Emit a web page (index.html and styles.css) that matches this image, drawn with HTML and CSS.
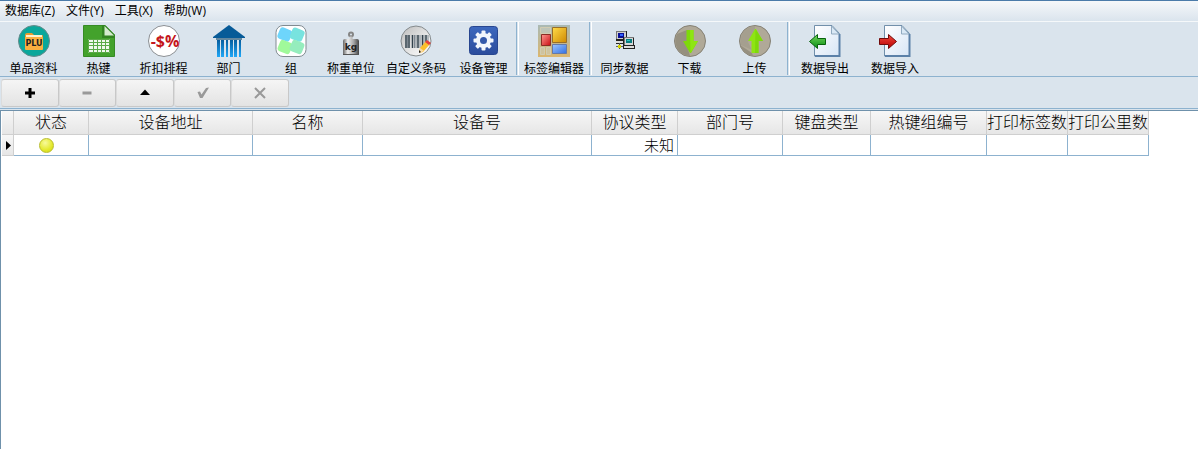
FILE: index.html
```html
<!DOCTYPE html>
<html lang="zh-CN">
<head>
<meta charset="utf-8">
<title>设备管理</title>
<link rel="stylesheet" href="styles.css">
</head>
<body>
<div class="app">
  <nav class="menu">
    <button class="menu-item">数据库(Z)</button>
    <button class="menu-item">文件(Y)</button>
    <button class="menu-item">工具(X)</button>
    <button class="menu-item">帮助(W)</button>
  </nav>

  <div class="toolbar" role="toolbar">
    <button class="tool">
      <svg class="icon" viewBox="0 0 32 32"><circle cx="16" cy="16" r="15.5" fill="#0aa79b" stroke="#668b8b"/><path d="M7 10q0-2 2-2h5l2 2h8q1 0 1 1v13H7z" fill="#ec9a2e"/><path d="M8 10h16v4H8z" fill="#fff0cc"/><rect x="7" y="12" width="18" height="13" rx="1" fill="#fbb040"/><text x="16" y="20.500" text-anchor="middle" class="plu">PLU</text></svg>
      <span>单品资料</span>
    </button>
    <button class="tool">
      <svg class="icon" viewBox="0 0 32 32"><path d="M.5.500H22L31.500 10v21.500H.5z" fill="#43a22c" stroke="#368b25"/><path d="M19 0h3l10 10v3H19z" fill="#328521"/><path d="M21.500 1v9.500H31z" fill="#d4ecce"/><rect x="5" y="14" width="22" height="14" fill="#f1f8ee"/><path d="M5.500 14.500h21v13h-21zM5 17.500h22M5 20.500h22M5 24.500h22M10.500 14v14M14.500 14v14M18.500 14v14M22.500 14v14" fill="none" stroke="#5baa48"/></svg>
      <span>热键</span>
    </button>
    <button class="tool">
      <svg class="icon" viewBox="0 0 32 32"><circle cx="16" cy="16" r="15.500" fill="#fff" stroke="#8b8f93"/><text x="17" y="22" text-anchor="middle" class="discount">-$%</text></svg>
      <span>折扣排程</span>
    </button>
    <button class="tool">
      <svg class="icon" viewBox="0 0 32 32"><defs><linearGradient id="pillar" x2="0" y2="1"><stop stop-color="#075e9f"/><stop offset="1" stop-color="#20a8f8"/></linearGradient></defs><path d="M16 0l16 12v1H0v-1z" fill="#075b98"/><path d="M3 13h26v2H3z" fill="#62879f"/><path d="M4 15h3v17H4zM8 15h3v17H8zM13 15h2v17h-2zM17 15h3v17h-3zM21 15h3v17h-3zM26 15h2v17h-2z" fill="url(#pillar)"/></svg>
      <span>部门</span>
    </button>
    <button class="tool tool-narrow">
      <svg class="icon" viewBox="0 0 32 32"><rect x="1" y=".5" width="30" height="31" rx="7" fill="#fff" stroke="#818b91"/><g><rect x="3.500" y="3.500" width="13" height="12" rx="3" fill="#6ed5fb" transform="rotate(22 10 9)"/><rect x="16" y="3.500" width="13" height="12" rx="3" fill="#78e3df" transform="rotate(22 22 9)"/><rect x="3.500" y="16" width="13" height="12" rx="3" fill="#a0f99a" transform="rotate(22 10 22)"/><rect x="15.500" y="16" width="13" height="12" rx="3" fill="#95edbd" transform="rotate(22 22 22)"/></g></svg>
      <span>组</span>
    </button>
    <button class="tool tool-narrow">
      <svg class="icon" viewBox="0 0 32 32"><defs><linearGradient id="steel"><stop stop-color="#666"/><stop offset=".3" stop-color="#eee"/><stop offset=".65" stop-color="#aaa"/><stop offset="1" stop-color="#444"/></linearGradient></defs><circle cx="16" cy="9.500" r="2" fill="none" stroke="#858585" stroke-width="2"/><path d="M14.500 11.500h3v2.500h4.500q2 0 2 2v14H8V16q0-2 2-2h4.500z" fill="url(#steel)"/><path d="M8 29.500h16" stroke="#555"/><text x="16" y="25" text-anchor="middle" class="kg">kg</text></svg>
      <span>称重单位</span>
    </button>
    <button class="tool tool-wide">
      <svg class="icon" viewBox="0 0 32 32"><defs><linearGradient id="silver" x2="1" y2="1"><stop stop-color="#bbb"/><stop offset=".6" stop-color="#e9e9e9"/><stop offset="1" stop-color="#fff"/></linearGradient></defs><circle cx="16" cy="16" r="15" fill="url(#silver)" stroke="#858b8e"/><path d="M6 10v13M9 10v13M12.500 10v13M18 10v13M22.500 10v13M26 10v9" stroke="#32414c" stroke-width="1.500"/><path d="M7.500 10v13M14.500 10v13M16 10v13M20 10v13M24 10v10M28 10v8" stroke="#7d8790"/><path d="M19 28l1-5 6-7 4 3-7 8z" fill="#fbc02d"/><path d="M25 17l2-2 4 3-2 2z" fill="#e5413b"/><path d="M19 28l1-5 4 3z" fill="#f7d9aa"/><path d="M19 28v-3l2 2z" fill="#222"/></svg>
      <span>自定义条码</span>
    </button>
    <button class="tool">
      <svg class="icon" viewBox="0 0 32 32"><defs><linearGradient id="blue" x2="0" y2="1"><stop stop-color="#3d68be"/><stop offset="1" stop-color="#2b4c9c"/></linearGradient></defs><rect x="1.500" y="1.500" width="28" height="28" rx="3" fill="url(#blue)" stroke="#284690"/><g fill="#f2f6fc" transform="translate(15.500 15.500)"><circle r="7.500"/><g id="teeth"><rect x="-2" y="-10" width="4" height="20" rx="1"/><rect x="-10" y="-2" width="20" height="4" rx="1"/></g><use href="#teeth" transform="rotate(45)"/></g><circle cx="15.500" cy="15.500" r="3.500" fill="#3459aa"/></svg>
      <span>设备管理</span>
    </button>
    <span class="separator"></span>
    <button class="tool tool-wide">
      <svg class="icon" viewBox="0 0 32 32"><defs><linearGradient id="sand" x2="0" y2="1"><stop stop-color="#a9b9b4"/><stop offset="1" stop-color="#dbb66e"/></linearGradient><linearGradient id="gold" x2="1" y2="1"><stop stop-color="#ffdb4a"/><stop offset="1" stop-color="#cf8900"/></linearGradient><linearGradient id="redbox" x2="1" y2="1"><stop stop-color="#ff9790"/><stop offset="1" stop-color="#c90d12"/></linearGradient><linearGradient id="bluebox" x2="1" y2="1"><stop stop-color="#9dc5ff"/><stop offset="1" stop-color="#316fe0"/></linearGradient></defs><path d="M0 0h32v32H0z" fill="url(#sand)"/><path d="M2.500 2.500h10v6h-10zM2.500 22.500h4v7h-4zM8.500 22.500h4v7h-4z" fill="#cbd0c3" fill-opacity=".5" stroke="#d1ccb2"/><path d="M14.500 2.500h14v15h-14z" fill="url(#gold)" stroke="#986f28"/><path d="M3.500 9.500h9v11h-9z" fill="url(#redbox)" stroke="#8c2c25"/><path d="M14.500 19.500h14v9h-14z" fill="url(#bluebox)" stroke="#6579a5"/></svg>
      <span>标签编辑器</span>
    </button>
    <span class="separator"></span>
    <button class="tool">
      <svg class="icon" viewBox="0 0 32 32"><path d="M7 6h11v9h-1v4H7z" fill="#222"/><path d="M7 6h10v8H7z" fill="#d0d0d0"/><path d="M7 6h10v1H8v7H7z" fill="#777"/><path d="M9 8h6v5H9z" fill="#0a0f96"/><path d="M11 9h3v2h-3z" fill="#3264ff"/><path d="M7 16h8v2H7z" fill="#ddd"/><path d="M14 12h11v8h1v4H14z" fill="#222"/><path d="M15 12h9v8h-9z" fill="#d6d6d6"/><path d="M15 12h10v1h-9v7h-1z" fill="#777"/><path d="M17 14h6v4h-6z" fill="#087d80"/><path d="M18 15h3v1h-3z" fill="#28c8c0"/><path d="M15 21h10v2H15z" fill="#ddd"/><path d="M7 21h7v1H7z" fill="#666"/><path d="M10 18h1v6h-1z" fill="#555"/><path d="M9 20h3v3H9z" fill="#d9d800"/></svg>
      <span>同步数据</span>
    </button>
    <button class="tool">
      <svg class="icon" viewBox="0 0 32 32"><circle cx="16" cy="16" r="15.500" fill="#b0a998" stroke="#858175"/><path d="M16 31A15 15 0 0 1 3 9L13 5v15z" fill="#96907f"/><path d="M12.500 5h7v11H24l-7 12h-1L9 16h3.500z" fill="#7ed90a"/><path d="M16 5h3.500v11H24l-7.500 12z" fill="#8ee512"/></svg>
      <span>下载</span>
    </button>
    <button class="tool">
      <svg class="icon" viewBox="0 0 32 32"><circle cx="16" cy="16" r="15.500" fill="#b0a998" stroke="#858175"/><path d="M14 31A15 15 0 0 1 1 20l12 8z" fill="#969080"/><path d="M2 20A15 15 0 0 1 16 1v4L9 17l4 8z" fill="#a59f8f"/><path d="M12.500 28h7V16H24L17 4h-1L9 16h3.500z" fill="#8ee512"/><path d="M16 28h3.500V16H24L16.500 4z" fill="#7ed90a"/></svg>
      <span>上传</span>
    </button>
    <span class="separator"></span>
    <button class="tool tool-wide">
      <svg class="icon" viewBox="0 0 32 32"><defs><linearGradient id="page" x2="1" y2="1"><stop stop-color="#fff"/><stop offset="1" stop-color="#d7e5f6"/></linearGradient><linearGradient id="green" x2="0" y2="1"><stop stop-color="#75d75b"/><stop offset="1" stop-color="#078c15"/></linearGradient></defs><path d="M5.500.500H23l7.500 8v22.500h-25z" fill="url(#page)" stroke="#718faa"/><path d="M6 31h24.500V9" fill="none" stroke="#5b80a8" stroke-width="2"/><path d="M22.500 1v8H30z" fill="#d9e8f5" stroke="#91aac0"/><path d="M.5 16.500l8-7v4h8v6h-8v4z" fill="url(#green)" stroke="#08630d"/></svg>
      <span>数据导出</span>
    </button>
    <button class="tool tool-wide">
      <svg class="icon" viewBox="0 0 32 32"><defs><linearGradient id="crimson" x2="0" y2="1"><stop stop-color="#f04a40"/><stop offset="1" stop-color="#b90000"/></linearGradient></defs><path d="M5.500.500H23l7.500 8v22.500h-25z" fill="url(#page)" stroke="#718faa"/><path d="M6 31h24.500V9" fill="none" stroke="#5b80a8" stroke-width="2"/><path d="M22.500 1v8H30z" fill="#d9e8f5" stroke="#91aac0"/><path d="M17.500 16.500l-8-7v4h-9v6h9v4z" fill="url(#crimson)" stroke="#710b0b"/></svg>
      <span>数据导入</span>
    </button>
  </div>

  <div class="navigator">
    <div class="nav-buttons">
      <button class="nav-button" aria-label="新增"><svg class="glyph" viewBox="0 0 12 12"><path d="M4.500 1h3v3.500H11v3H7.500V11h-3V7.500H1v-3h3.500z"/></svg></button>
      <button class="nav-button" aria-label="删除" disabled><svg class="glyph" viewBox="0 0 12 12"><path d="M1.500 4.500h9v3h-9z"/></svg></button>
      <button class="nav-button" aria-label="编辑"><svg class="glyph" viewBox="0 0 12 12"><path d="M6 2.500L11 8H1z"/></svg></button>
      <button class="nav-button" aria-label="保存" disabled><svg class="glyph" viewBox="0 0 12 12"><path d="M.5 5L3 4.500l1.500 3L9 1l3-.5L5.500 11H3z"/></svg></button>
      <button class="nav-button" aria-label="取消" disabled><svg class="glyph" viewBox="0 0 12 12"><path d="M1 1l10 10M11 1L1 11" stroke="currentColor" stroke-width="2"/></svg></button>
    </div>
  </div>

  <main class="grid">
    <table class="devices">
      <colgroup><col class="c-mark"><col class="c-status"><col class="c-address"><col class="c-name"><col class="c-device"><col class="c-protocol"><col class="c-dept"><col class="c-keyboard"><col class="c-hotkey"><col class="c-count"><col class="c-count"></colgroup>
      <thead>
        <tr><th></th><th>状态</th><th>设备地址</th><th>名称</th><th>设备号</th><th>协议类型</th><th>部门号</th><th>键盘类型</th><th>热键组编号</th><th>打印标签数</th><th>打印公里数</th></tr>
      </thead>
      <tbody>
        <tr>
          <td class="mark"><svg class="marker" viewBox="0 0 5 9"><path d="M0 0l5 4.500L0 9z"/></svg></td>
          <td class="status"><span class="ball"></span></td>
          <td></td><td></td><td></td><td class="value">未知</td><td></td><td></td><td></td><td></td><td></td>
        </tr>
      </tbody>
    </table>
  </main>
</div>
</body>
</html>
```
FILE: styles.css
```css
* { box-sizing: border-box; }

body {
  margin: 0;
  font-family: "Open Sans", "Noto Sans CJK SC", sans-serif;
  font-size: 12px;
  color: #000;
  background: #dae4ed;
}

button {
  margin: 0;
  padding: 0;
  border: 0;
  background: none;
  font: inherit;
  color: inherit;
}

.app {
  display: flex;
  flex-direction: column;
  min-height: 100vh;
}

.menu {
  display: flex;
  gap: 11px;
  padding: 0 5px;
  border-top: 1px solid #4b7ba9;
  border-bottom: 1px solid #f5f8fa;
  background: linear-gradient(#f6f8fa, #dae4ed);
}

.menu-item {
  line-height: 20px;
  white-space: nowrap;
}

.toolbar {
  display: flex;
  padding-left: 1px;
  border-bottom: 1px solid #8db2cf;
}

.tool {
  display: flex;
  flex: none;
  flex-direction: column;
  align-items: center;
  gap: 4px;
  width: 65px;
  padding-top: 3px;
  line-height: 15px;
  white-space: nowrap;
}

.tool-narrow { width: 60px; }
.tool-wide { width: 70px; }

.icon {
  width: 32px;
  height: 32px;
}

.plu {
  font: bold 8px "DejaVu Sans", sans-serif;
  fill: #222;
}

.discount {
  font: bold 16px "Open Sans", sans-serif;
  fill: #c4161c;
}

.kg {
  font: bold 9px "DejaVu Sans", sans-serif;
  fill: #222;
}

.separator {
  flex: none;
  width: 3px;
  margin-bottom: 1px;
  border-left: 1px solid #8db2cf;
  border-right: 1px solid #fff;
}

.navigator {
  padding: 2px 1px 1px;
  border-bottom: 1px solid #8db2cf;
}

.nav-buttons {
  display: grid;
  grid-template-columns: repeat(5, 1fr);
  max-width: 288px;
}

.nav-button {
  display: flex;
  align-items: center;
  justify-content: center;
  height: 28px;
  border: 1px solid #c8c8c8;
  border-left-color: #dcdcdc;
  border-radius: 3px;
  background: linear-gradient(#f5f5f5, #e3e3e3);
}

.nav-button:disabled { color: #999; }

.glyph {
  width: 12px;
  height: 12px;
  fill: currentColor;
}

.grid {
  flex: 1;
  margin-top: 1px;
  border-top: 1px solid #6f91ab;
  border-left: 1px solid #6f91ab;
  padding-left: 1px;
  background: #fff;
}

.devices {
  width: 1147px;
  table-layout: fixed;
  border-collapse: separate;
  border-spacing: 0;
}

.c-mark { width: 12px; }
.c-status { width: 75px; }
.c-address { width: 164px; }
.c-name { width: 110px; }
.c-device { width: 229px; }
.c-protocol { width: 86px; }
.c-dept { width: 105px; }
.c-keyboard { width: 88px; }
.c-hotkey { width: 116px; }
.c-count { width: 81px; }

.devices th {
  height: 24px;
  padding: 0;
  border-right: 1px solid #cfcfcf;
  border-bottom: 1px solid #cfcfcf;
  background: linear-gradient(#f7f7f7, #e6e6e6);
  font-size: 16px;
  font-weight: 300;
  line-height: 23px;
  white-space: nowrap;
}

.devices td {
  height: 21px;
  padding: 0;
  border-right: 1px solid #8db2cf;
  border-bottom: 1px solid #8db2cf;
}

.devices .mark {
  padding-left: 4px;
  border-color: #cfcfcf;
  background: linear-gradient(#f7f7f7, #e6e6e6);
}

.marker {
  display: block;
  width: 5px;
  height: 9px;
}

.devices .status { padding-left: 25px; }

.ball {
  display: block;
  width: 15px;
  height: 15px;
  border: 1px solid #b9bd2c;
  border-radius: 50%;
  background: radial-gradient(circle at 40% 30%, #f8fa9c, #e4e92b 60%, #c9ce1c);
}

.devices .value {
  padding-right: 3px;
  font-size: 15px;
  font-weight: 300;
  line-height: 18px;
  text-align: right;
}
```
